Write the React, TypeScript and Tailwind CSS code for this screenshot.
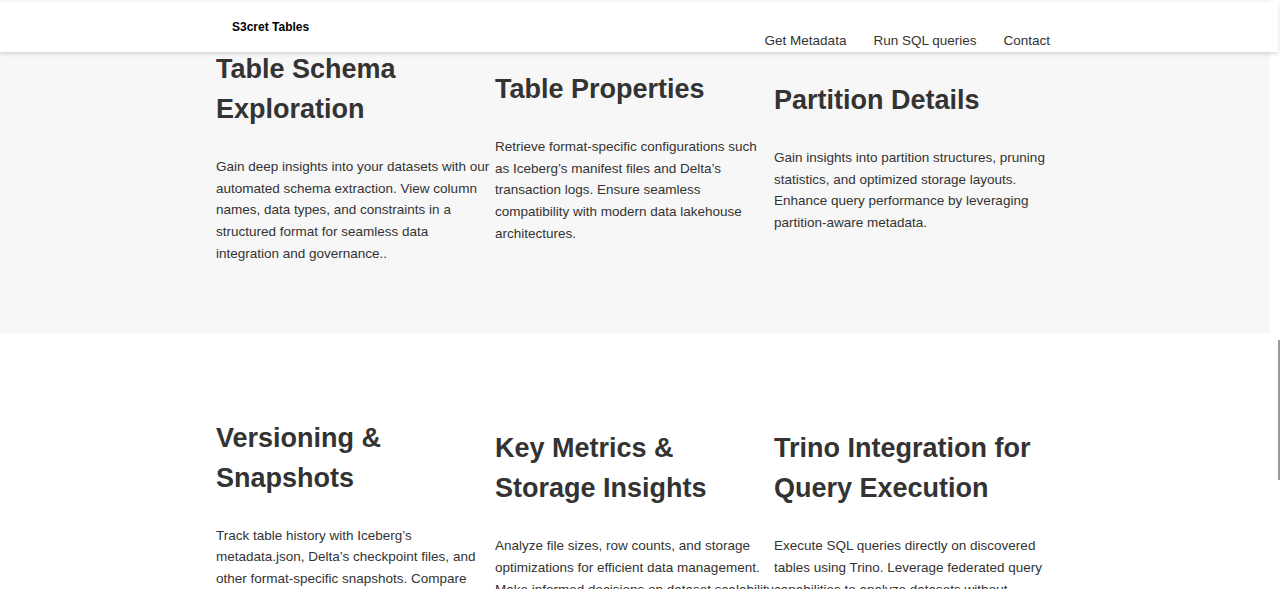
import React from "react";

const features1 = [
  {
    title: "Table Schema Exploration",
    body: "Gain deep insights into your datasets with our automated schema extraction. View column names, data types, and constraints in a structured format for seamless data integration and governance..",
  },
  {
    title: "Table Properties",
    body: "Retrieve format-specific configurations such as Iceberg\u2019s manifest files and Delta\u2019s transaction logs. Ensure seamless compatibility with modern data lakehouse architectures.",
  },
  {
    title: "Partition Details",
    body: "Gain insights into partition structures, pruning statistics, and optimized storage layouts. Enhance query performance by leveraging partition-aware metadata.",
  },
];

const features2 = [
  {
    title: "Versioning & Snapshots",
    body: "Track table history with Iceberg\u2019s metadata.json, Delta\u2019s checkpoint files, and other format-specific snapshots. Compare versions over time to audit changes and roll back with confidence.",
  },
  {
    title: "Key Metrics & Storage Insights",
    body: "Analyze file sizes, row counts, and storage optimizations for efficient data management. Make informed decisions on dataset scalability and performance tuning.",
  },
  {
    title: "Trino Integration for Query Execution",
    body: "Execute SQL queries directly on discovered tables using Trino. Leverage federated query capabilities to analyze datasets without moving data across systems.",
  },
];

function Feature({ title, body }: { title: string; body: string }) {
  return (
    <div className="w-[279px]">
      <h2 className="text-[27px] leading-[40px] font-bold text-[#333] mb-[27px]">{title}</h2>
      <p className="w-[279px] text-[13.5px] leading-[21.7px] text-[#333]">{body}</p>
    </div>
  );
}

export default function App() {
  return (
    <div
      className="relative w-[1280px] h-[589px] overflow-hidden bg-white"
      style={{ fontFamily: '"Liberation Sans", Arial, sans-serif' }}
    >
      <header className="absolute left-0 top-[2px] z-10 w-[1278px] h-[50px] bg-white shadow-[0_2px_4px_rgba(0,0,0,0.14)]">
        <div className="w-[1270px]">
          <div className="mx-auto flex h-[50px] w-[838px] justify-between">
            <div className="pl-[16px] pt-[17px] text-[12px] leading-[16px] font-bold text-black">
              S3cret Tables
            </div>
            <nav className="flex items-end gap-[27px] pr-[4px] pb-[1px] text-[13.5px] leading-[20px] text-[#333]">
              <a>Get Metadata</a>
              <a>Run SQL queries</a>
              <a>Contact</a>
            </nav>
          </div>
        </div>
      </header>

      <section className="w-[1270px] bg-[#f7f7f7] pt-[49px] pb-[68px]">
        <div className="mx-auto grid w-[838px] grid-cols-[279px_279px_279px] items-center">
          {features1.map((f) => (
            <Feature key={f.title} {...f} />
          ))}
        </div>
      </section>

      <section className="w-[1270px] bg-white pt-[85px] pb-[80px]">
        <div className="mx-auto grid w-[838px] grid-cols-[279px_279px_279px] items-center">
          {features2.map((f) => (
            <Feature key={f.title} {...f} />
          ))}
        </div>
      </section>

      <div className="absolute right-0 top-[340px] h-[140px] w-[2px] bg-[#9a9a9a]" />
    </div>
  );
}
